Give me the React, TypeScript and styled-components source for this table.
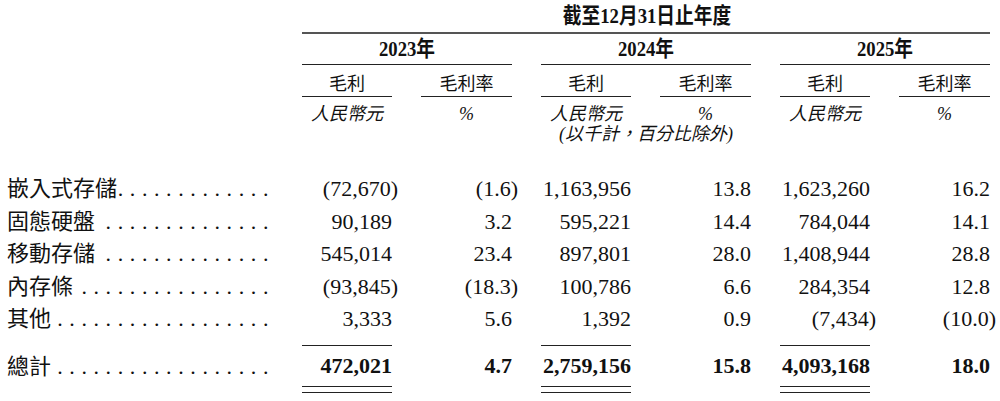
import React from "react";
import styled, { createGlobalStyle } from "styled-components";

const GlobalStyle = createGlobalStyle`
  html, body {
    margin: 0;
    padding: 0;
    background: #ffffff;
  }
  body {
    width: 1000px;
    height: 401px;
    overflow: hidden;
    color: #111111;
    font-family: "Liberation Serif", "Noto Sans CJK TC", serif;
  }
`;

const LABEL_W = 302;
const COL_A = 90;
const COL_B = 91;
const INNER_GAP = 29;
const GROUP_GAP = 29;
const GROUP_W = COL_A + INNER_GAP + COL_B;
const COLS_W = GROUP_W * 3 + GROUP_GAP * 2;
const LABEL_PAD_L = 7;
const LABEL_PAD_R = 27;
const CHAR_W = 22;
const DOT_PITCH = 12.1;

const Page = styled.div`
  display: flex;
  flex-direction: column;
  width: 1000px;
`;

const HeadRow = styled.div<{ $h: number }>`
  display: flex;
  height: ${(p) => p.$h}px;
  padding-left: ${LABEL_W}px;
`;

const Title = styled.div`
  width: ${COLS_W}px;
  display: flex;
  align-items: center;
  justify-content: center;
  padding-left: 3px;
  box-sizing: border-box;
`;

const Condensed = styled.span<{ $size: number }>`
  display: inline-block;
  font-size: ${(p) => p.$size}px;
  font-weight: 700;
  line-height: 1;
  white-space: nowrap;
  transform: scaleX(0.85);
`;

const TopRule = styled.div`
  margin-left: ${LABEL_W}px;
  width: ${COLS_W}px;
  height: 2px;
  background: #555555;
`;

const Groups = styled.div`
  display: flex;
  gap: ${GROUP_GAP}px;
`;

const YearCell = styled.div`
  box-sizing: border-box;
  width: ${GROUP_W}px;
  height: 31px;
  border-bottom: 1.5px solid #222222;
  display: flex;
  align-items: center;
  justify-content: center;
`;

const Pair = styled.div`
  display: grid;
  grid-template-columns: ${COL_A}px ${COL_B}px;
  column-gap: ${INNER_GAP}px;
  align-content: start;
`;

const SubCell = styled.div`
  box-sizing: border-box;
  height: 32px;
  border-bottom: 1.5px solid #222222;
  display: flex;
  align-items: center;
  justify-content: center;
  padding-top: 3px;
  font-family: "Noto Sans CJK TC", sans-serif;
  font-size: 18px;
  line-height: 1;
`;

const UnitCell = styled.div<{ $span?: boolean }>`
  grid-column: ${(p) => (p.$span ? "1 / span 2" : "auto")};
  text-align: center;
  font-style: italic;
  font-size: 18px;
  line-height: 20px;
  white-space: nowrap;
`;

const UnitsArea = styled(Pair)`
  padding-top: 7px;
`;

const DataRow = styled.div<{ $h: number; $bold?: boolean; $mt?: number }>`
  display: flex;
  height: ${(p) => p.$h}px;
  margin-top: ${(p) => p.$mt ?? 0}px;
  font-size: 22px;
  font-weight: ${(p) => (p.$bold ? 700 : 400)};
  line-height: ${(p) => p.$h}px;
`;

const LabelCell = styled.div<{ $lh?: number }>`
  box-sizing: border-box;
  width: ${LABEL_W}px;
  flex: none;
  display: flex;
  align-items: baseline;
  padding-left: ${LABEL_PAD_L}px;
  padding-right: ${LABEL_PAD_R}px;
  font-weight: 400;
  ${(p) => (p.$lh ? `line-height: ${p.$lh}px;` : "")}
`;

const LabelText = styled.span`
  flex: none;
  white-space: nowrap;
`;

const Leader = styled.span`
  flex: 1 1 auto;
  min-width: 0;
  display: flex;
  justify-content: flex-end;
`;

const Dots = styled.span`
  flex: none;
  white-space: nowrap;
  letter-spacing: 6.6px;
`;

const NumCell = styled.div<{ $w: number }>`
  box-sizing: border-box;
  width: ${(p) => p.$w}px;
  text-align: right;
  white-space: nowrap;
`;

const TotalCell = styled.div<{ $w: number; $rule: boolean }>`
  box-sizing: border-box;
  width: ${(p) => p.$w}px;
  display: flex;
  flex-direction: column;
  text-align: right;
  white-space: nowrap;
  border-top: 1.5px solid ${(p) => (p.$rule ? "#222222" : "transparent")};
  line-height: 40px;
`;

const DoubleRule = styled.div<{ $show: boolean }>`
  box-sizing: border-box;
  height: 7px;
  border-top: 1.5px solid ${(p) => (p.$show ? "#222222" : "transparent")};
  border-bottom: 1.5px solid ${(p) => (p.$show ? "#222222" : "transparent")};
`;

const Hang = styled.span`
  margin-right: -6px;
`;

const Num: React.FC<{ v: string }> = ({ v }) => {
  if (v.startsWith("(")) {
    return (
      <>
        {v.slice(0, -1)}
        <Hang>)</Hang>
      </>
    );
  }
  return <>{v}</>;
};

const rows: string[][] = [
  ["嵌入式存儲", "(72,670)", "(1.6)", "1,163,956", "13.8", "1,623,260", "16.2"],
  ["固態硬盤", "90,189", "3.2", "595,221", "14.4", "784,044", "14.1"],
  ["移動存儲", "545,014", "23.4", "897,801", "28.0", "1,408,944", "28.8"],
  ["內存條", "(93,845)", "(18.3)", "100,786", "6.6", "284,354", "12.8"],
  ["其他", "3,333", "5.6", "1,392", "0.9", "(7,434)", "(10.0)"],
];

const total = ["總計", "472,021", "4.7", "2,759,156", "15.8", "4,093,168", "18.0"];

const years = ["2023年", "2024年", "2025年"];

const dotsFor = (text: string) => {
  const avail = LABEL_W - LABEL_PAD_L - LABEL_PAD_R - CHAR_W * text.length + 1;
  return ".".repeat(Math.max(0, Math.floor(avail / DOT_PITCH)));
};

const Label: React.FC<{ text: string; lh?: number }> = ({ text, lh }) => (
  <LabelCell $lh={lh}>
    <LabelText>{text}</LabelText>
    <Leader>
      <Dots>{dotsFor(text)}</Dots>
    </Leader>
  </LabelCell>
);

export default function App() {
  return (
    <>
      <GlobalStyle />
      <Page>
        <HeadRow $h={32}>
          <Title>
            <Condensed $size={22}>截至12月31日止年度</Condensed>
          </Title>
        </HeadRow>
        <TopRule />
        <HeadRow $h={31}>
          <Groups>
            {years.map((y) => (
              <YearCell key={y}>
                <Condensed $size={22}>{y}</Condensed>
              </YearCell>
            ))}
          </Groups>
        </HeadRow>
        <HeadRow $h={32}>
          <Groups>
            {years.map((y) => (
              <Pair key={y}>
                <SubCell>毛利</SubCell>
                <SubCell>毛利率</SubCell>
              </Pair>
            ))}
          </Groups>
        </HeadRow>
        <HeadRow $h={76}>
          <Groups>
            {years.map((y, i) => (
              <UnitsArea key={y}>
                <UnitCell>人民幣元</UnitCell>
                <UnitCell>%</UnitCell>
                {i === 1 && <UnitCell $span>(以千計，百分比除外)</UnitCell>}
              </UnitsArea>
            ))}
          </Groups>
        </HeadRow>
        {rows.map((r) => (
          <DataRow key={r[0]} $h={32.5}>
            <Label text={r[0]} />
            <Groups>
              {[0, 1, 2].map((g) => (
                <Pair key={g}>
                  <NumCell $w={COL_A}>
                    <Num v={r[1 + g * 2]} />
                  </NumCell>
                  <NumCell $w={COL_B}>
                    <Num v={r[2 + g * 2]} />
                  </NumCell>
                </Pair>
              ))}
            </Groups>
          </DataRow>
        ))}
        <DataRow $h={48} $bold $mt={9.5}>
          <Label text={total[0]} lh={43} />
          <Groups>
            {[0, 1, 2].map((g) => (
              <Pair key={g}>
                <TotalCell $w={COL_A} $rule>
                  <Num v={total[1 + g * 2]} />
                  <DoubleRule $show />
                </TotalCell>
                <TotalCell $w={COL_B} $rule={false}>
                  <Num v={total[2 + g * 2]} />
                  <DoubleRule $show={false} />
                </TotalCell>
              </Pair>
            ))}
          </Groups>
        </DataRow>
      </Page>
    </>
  );
}
